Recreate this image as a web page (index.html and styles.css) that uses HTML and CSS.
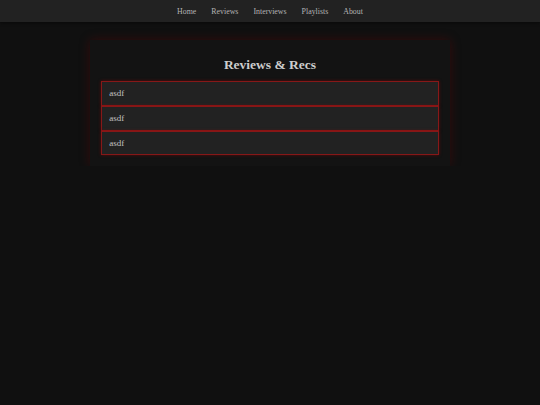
FILE: index.html
```html
<!DOCTYPE html>
<html>
<head>
<meta charset="utf-8">
<link rel="stylesheet" href="styles.css">
</head>
<body>
<nav class="nav">
  <a href="#">Home</a>
  <a href="#">Reviews</a>
  <a href="#">Interviews</a>
  <a href="#">Playlists</a>
  <a href="#">About</a>
</nav>
<main class="panel">
  <h2 class="title">Reviews &amp; Recs</h2>
  <ul class="list">
    <li class="item">asdf</li>
    <li class="item">asdf</li>
    <li class="item">asdf</li>
  </ul>
</main>
</body>
</html>
```
FILE: styles.css
```css
html, body {
  margin: 0;
  padding: 0;
  background: #101010;
  font-family: "Liberation Serif", "Times New Roman", Times, serif;
}
.nav {
  height: 22px;
  background: #222;
  display: flex;
  justify-content: center;
  align-items: center;
  gap: 15px;
  box-shadow: 0 1px 3px rgba(0,0,0,0.5);
}
.nav a {
  color: #b4b4b4;
  text-decoration: none;
  font-size: 7.875px;
}
.panel {
  width: 337.5px;
  margin: 18px auto 0;
  padding: 11.25px;
  background: #131313;
  box-shadow: 0 0 10px rgba(120, 0, 0, 0.35);
}
.title {
  margin: 6px 0 8px;
  text-align: center;
  color: #cdcdcd;
  font-size: 13.5px;
  font-weight: bold;
}
.list {
  list-style: none;
  margin: 0;
  padding: 0;
  display: flex;
  flex-direction: column;
}
.item {
  height: 22.67px;
  line-height: 22.67px;
  padding: 0 7px;
  background: #222;
  border: 1px solid #861818;
  box-shadow: 0 0 3px rgba(160, 0, 0, 0.5);
  color: #c4c4c4;
  font-size: 9px;
}
```
